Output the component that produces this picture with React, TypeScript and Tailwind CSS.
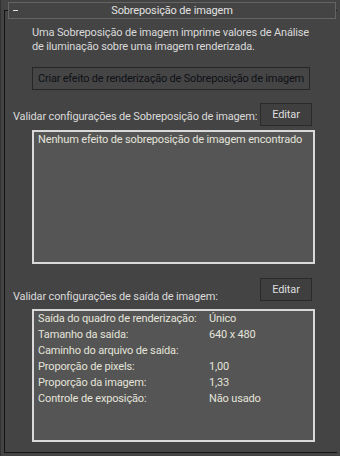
import React from "react";

// 3ds Max style rollout: "Sobreposição de imagem"
const font = "font-['Roboto',sans-serif] text-[11px] tracking-[-0.15px]";

const rows: [string, string][] = [
  ["Saída do quadro de renderização:", "Único"],
  ["Tamanho da saída:", "640 x 480"],
  ["Caminho do arquivo de saída:", ""],
  ["Proporção de pixels:", "1,00"],
  ["Proporção da imagem:", "1,33"],
  ["Controle de exposição:", "Não usado"],
];

const EditButton = () => (
  <button
    type="button"
    className="h-[23px] w-[52px] border border-[#2a2a2a] bg-[#3f3f3f] text-[#dedede] leading-none"
  >
    Editar
  </button>
);

export default function App() {
  return (
    <div
      className={`h-[456px] w-[340px] overflow-hidden whitespace-nowrap border-l border-[#333] bg-[#444] pt-[10px] text-[#dadada] ${font}`}
    >
      <div className="ml-[3px] flex h-[443px] w-[333px] flex-col border-b border-l border-t border-[#151515]">
        <div className="relative -mt-[9px] ml-[3px] flex h-[17px] w-[328px] items-center border border-[#646464] bg-[#444]">
          <span className="absolute left-[4px] top-[7px] h-px w-[5px] bg-[#e0e0e0]" />
          <span className="w-full text-center leading-[15px] text-[#e2e2e2]">
            Sobreposição de imagem
          </span>
        </div>

        <p className="ml-[27px] mt-[7px] leading-[14px]">
          Uma Sobreposição de imagem imprime valores de Análise
          <br />
          de iluminação sobre uma imagem renderizada.
        </p>

        <button
          type="button"
          className="ml-[27px] mt-[13px] h-[23px] w-[278px] overflow-visible border border-[#262626] bg-[#454545] px-0 tracking-[-0.2px] text-[#0e1016] leading-none"
        >
          Criar efeito de renderização de Sobreposição de imagem
        </button>

        <div className="ml-[8px] mr-[25px] mt-[13px] flex items-end justify-between">
          <span className="pb-[2px] leading-[14px]">
            Validar configurações de Sobreposição de imagem:
          </span>
          <EditButton />
        </div>

        <div className="ml-[27px] mt-[4px] h-[134px] w-[283px] border-2 border-[#d9d9d9] bg-[#555] px-[4px] leading-[16px] text-[#e4e4da]">
          Nenhum efeito de sobreposição de imagem encontrado
        </div>

        <div className="ml-[8px] mr-[25px] mt-[14px] flex items-end justify-between">
          <span className="-mb-[3px] leading-[14px]">
            Validar configurações de saída de imagem:
          </span>
          <EditButton />
        </div>

        <div className="ml-[27px] mt-[8px] h-[133px] w-[283px] border-2 border-[#d9d9d9] bg-[#555] px-[4px] leading-[16px] text-[#e4e4da]">
          {rows.map(([k, v]) => (
            <div key={k} className="flex">
              <span className="w-[171px] shrink-0">{k}</span>
              <span>{v}</span>
            </div>
          ))}
        </div>
      </div>
    </div>
  );
}
